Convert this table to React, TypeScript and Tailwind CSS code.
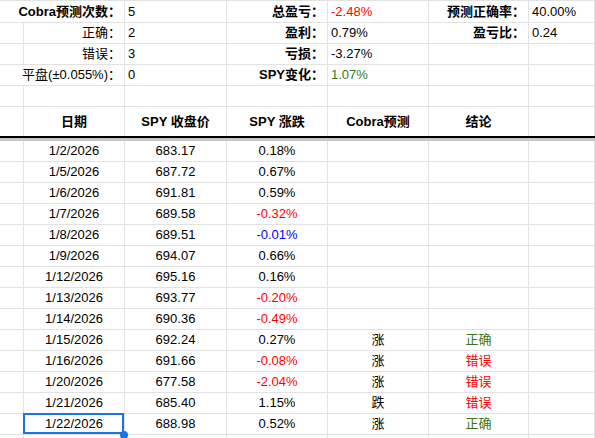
import React from 'react';

const RED = 'text-[#ff0000]';
const GREEN = 'text-[#38761d]';
const BLUE = 'text-[#0000ff]';

const grid = 'grid grid-cols-[24px_101px_102px_101px_101px_100px_1fr]';
const cell = 'border-r border-[#e2e2e2] flex items-center px-[3px] whitespace-nowrap overflow-visible';

const summary = [
  { label: 'Cobra预测次数：', bold: true, merged: true, val: '5', l2: '总盈亏：', v2: '-2.48%', c2: RED, l3: '预测正确率：', v3: '40.00%' },
  { label: '正确：', bold: false, merged: false, val: '2', l2: '盈利：', v2: '0.79%', c2: '', l3: '盈亏比：', v3: '0.24' },
  { label: '错误：', bold: false, merged: false, val: '3', l2: '亏损：', v2: '-3.27%', c2: '', l3: '', v3: '' },
  { label: '平盘(±0.055%)：', bold: false, merged: true, val: '0', l2: 'SPY变化：', v2: '1.07%', c2: GREEN, l3: '', v3: '' },
];

const rows = [
  { date: '1/2/2026', price: '683.17', chg: '0.18%', c: '', pred: '', res: '' },
  { date: '1/5/2026', price: '687.72', chg: '0.67%', c: '', pred: '', res: '' },
  { date: '1/6/2026', price: '691.81', chg: '0.59%', c: '', pred: '', res: '' },
  { date: '1/7/2026', price: '689.58', chg: '-0.32%', c: RED, pred: '', res: '' },
  { date: '1/8/2026', price: '689.51', chg: '-0.01%', c: BLUE, pred: '', res: '' },
  { date: '1/9/2026', price: '694.07', chg: '0.66%', c: '', pred: '', res: '' },
  { date: '1/12/2026', price: '695.16', chg: '0.16%', c: '', pred: '', res: '' },
  { date: '1/13/2026', price: '693.77', chg: '-0.20%', c: RED, pred: '', res: '' },
  { date: '1/14/2026', price: '690.36', chg: '-0.49%', c: RED, pred: '', res: '' },
  { date: '1/15/2026', price: '692.24', chg: '0.27%', c: '', pred: '涨', res: '正确' },
  { date: '1/16/2026', price: '691.66', chg: '-0.08%', c: RED, pred: '涨', res: '错误' },
  { date: '1/20/2026', price: '677.58', chg: '-2.04%', c: RED, pred: '涨', res: '错误' },
  { date: '1/21/2026', price: '685.40', chg: '1.15%', c: '', pred: '跌', res: '错误' },
  { date: '1/22/2026', price: '688.98', chg: '0.52%', c: '', pred: '涨', res: '正确' },
];

export default function App() {
  return (
    <div className="w-[595px] h-[438px] overflow-hidden bg-white text-[13px] text-black [font-family:'Liberation_Sans','Noto_Sans_CJK_SC',sans-serif]">
      {/* summary block */}
      {summary.map((s, i) => (
        <div
          key={i}
          className={`${grid} border-b border-[#e2e2e2] ${i === 0 ? 'h-[23px] border-t' : 'h-[21px]'}`}
        >
          {s.merged ? (
            <div className={`${cell} col-span-2 justify-end ${s.bold ? 'font-bold' : ''}`}>{s.label}</div>
          ) : (
            <>
              <div className={cell} />
              <div className={`${cell} justify-end`}>{s.label}</div>
            </>
          )}
          <div className={cell}>{s.val}</div>
          <div className={`${cell} justify-end font-bold`}>{s.l2}</div>
          <div className={`${cell} ${s.c2}`}>{s.v2}</div>
          <div className={`${cell} justify-end font-bold`}>{s.l3}</div>
          <div className={cell}>{s.v3}</div>
        </div>
      ))}
      <div className={`${grid} h-[21px] border-b border-[#e2e2e2]`}>
        {[0, 1, 2, 3, 4, 5, 6].map((k) => (
          <div key={k} className={cell} />
        ))}
      </div>

      {/* header */}
      <div className={`${grid} h-[31px] border-b-2 border-black font-bold`}>
        <div className={cell} />
        <div className={`${cell} justify-center`}>日期</div>
        <div className={`${cell} justify-center`}>SPY 收盘价</div>
        <div className={`${cell} justify-center`}>SPY 涨跌</div>
        <div className={`${cell} justify-center`}>Cobra预测</div>
        <div className={`${cell} justify-center`}>结论</div>
        <div className={cell} />
      </div>
      <div className="h-[3px] bg-[#c6c6c6]" />

      {/* data rows */}
      {rows.map((r, i) => {
        const last = i === rows.length - 1;
        return (
          <div key={r.date} className={`${grid} h-[21px] border-b border-[#e2e2e2]`}>
            <div className={cell} />
            <div className={`${cell} justify-center relative`}>
              {r.date}
              {last && (
                <>
                  <div className="absolute -left-[1px] -top-[1px] right-0 bottom-0 border-2 border-[#1a73e8] pointer-events-none" />
                  <div className="absolute -right-[4px] -bottom-[5px] w-[8px] h-[8px] rounded-full bg-[#1a73e8] z-10" />
                </>
              )}
            </div>
            <div className={`${cell} justify-center`}>{r.price}</div>
            <div className={`${cell} justify-center ${r.c}`}>{r.chg}</div>
            <div className={`${cell} justify-center`}>{r.pred}</div>
            <div className={`${cell} justify-center ${r.res === '正确' ? GREEN : RED}`}>{r.res}</div>
            <div className={cell} />
          </div>
        );
      })}
      <div className={`${grid} h-[21px] border-b border-[#e2e2e2]`}>
        {[0, 1, 2, 3, 4, 5, 6].map((k) => (
          <div key={k} className={cell} />
        ))}
      </div>
    </div>
  );
}
